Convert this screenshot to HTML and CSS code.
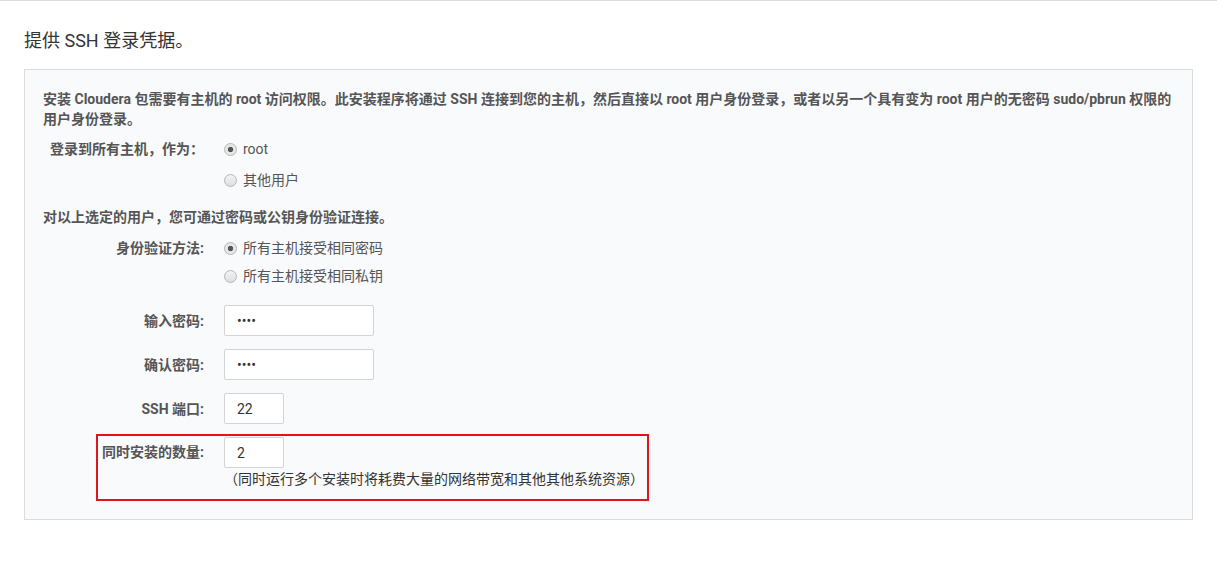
FILE: index.html
```html
<!DOCTYPE html>
<html lang="zh-CN">
<head>
<meta charset="utf-8">
<title>提供 SSH 登录凭据</title>
<link rel="stylesheet" href="styles.css">
</head>
<body>
<div class="topline"></div>
<div class="page">
  <h2 class="title">提供 SSH 登录凭据。</h2>
  <div class="panel">
    <p class="intro">安装 Cloudera 包需要有主机的 root 访问权限。此安装程序将通过 SSH 连接到您的主机，然后直接以 root 用户身份登录，或者以另一个具有变为 root 用户的无密码 sudo/pbrun 权限的用户身份登录。</p>

    <div class="form-row first">
      <label class="lbl">登录到所有主机，作为：</label>
      <div class="radios gap-wide">
        <label class="radio"><input type="radio" name="user" checked><span>root</span></label>
        <label class="radio"><input type="radio" name="user"><span>其他用户</span></label>
      </div>
    </div>

    <p class="sub">对以上选定的用户，您可通过密码或公钥身份验证连接。</p>

    <div class="form-row auth">
      <label class="lbl">身份验证方法:</label>
      <div class="radios gap-narrow">
        <label class="radio"><input type="radio" name="auth" checked><span>所有主机接受相同密码</span></label>
        <label class="radio"><input type="radio" name="auth"><span>所有主机接受相同私钥</span></label>
      </div>
    </div>

    <div class="form-row field pw">
      <label class="lbl">输入密码:</label>
      <div><input class="text wide" type="password" value="1234"></div>
    </div>

    <div class="form-row field">
      <label class="lbl">确认密码:</label>
      <div><input class="text wide" type="password" value="1234"></div>
    </div>

    <div class="form-row field">
      <label class="lbl">SSH 端口:</label>
      <div><input class="text narrow" type="text" value="22"></div>
    </div>

    <div class="form-row field count">
      <label class="lbl">同时安装的数量:</label>
      <div>
        <input class="text narrow" type="text" value="2">
        <div class="help">（同时运行多个安装时将耗费大量的网络带宽和其他其他系统资源）</div>
      </div>
    </div>

    <div class="highlight"></div>
  </div>
</div>
</body>
</html>
```

FILE: styles.css
```css
html, body {
  margin: 0;
  padding: 0;
  background: #fff;
}

body {
  font-family: Roboto, "Noto Sans CJK SC", sans-serif;
  font-size: 14px;
  line-height: 20px;
  color: #555;
}

.topline {
  height: 1px;
  background: #dcdcdc;
}

.page {
  padding: 0 24px;
}

.title {
  margin: 30px 0 18px;
  font-size: 18px;
  line-height: 20px;
  font-weight: normal;
  color: #333;
}

.panel {
  position: relative;
  background: #f9fafc;
  border: 1px solid #dcdcdc;
  padding: 19px 18px 30px;
}

.intro,
.sub {
  margin: 0;
  font-weight: bold;
  color: #555;
}

.sub {
  margin-top: 17px;
}

.form-row {
  display: grid;
  grid-template-columns: 161px 1fr;
  column-gap: 20px;
  align-items: center;
}

.form-row.first {
  margin-top: 10px;
  align-items: start;
}

.form-row.auth {
  margin-top: 11px;
  align-items: start;
}

.form-row.field {
  margin-top: 13px;
}

.form-row.pw {
  margin-top: 19px;
}

.form-row.count {
  align-items: start;
}

.form-row.count .lbl {
  line-height: 31px;
}

.lbl {
  text-align: right;
  font-weight: bold;
  color: #555;
  white-space: nowrap;
}

.radios {
  display: flex;
  flex-direction: column;
}

.gap-wide { gap: 11px; }
.gap-narrow { gap: 8px; }

.radio {
  display: flex;
  align-items: center;
  gap: 6px;
  height: 20px;
  color: #555;
}

.radio input {
  appearance: none;
  -webkit-appearance: none;
  margin: 0;
  width: 13px;
  height: 13px;
  border: 1px solid #b5b5b5;
  border-radius: 50%;
  background: linear-gradient(#f4f4f4, #dedede);
  box-sizing: border-box;
  position: relative;
}

.radio input:checked {
  background: radial-gradient(circle, #555 0 2.4px, #e2e2e2 3px, #f2f2f2 100%);
}

.text {
  display: block;
  box-sizing: border-box;
  height: 31px;
  margin: 0;
  padding: 0 12px;
  border: 1px solid #d4d4d4;
  border-radius: 2px;
  background: #fff;
  font-family: Roboto, "Noto Sans CJK SC", sans-serif;
  font-size: 14px;
  color: #333;
  outline: none;
}

.wide { width: 150px; }
.narrow { width: 60px; }

.help {
  margin-top: 1px;
  color: #333;
  white-space: nowrap;
}

.highlight {
  position: absolute;
  left: 71px;
  top: 364px;
  width: 553px;
  height: 67px;
  box-sizing: border-box;
  border: 2px solid #e0141e;
  pointer-events: none;
}
```
